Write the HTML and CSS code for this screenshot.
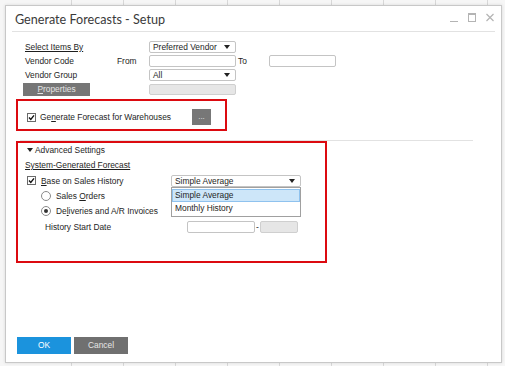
FILE: index.html
```html
<!DOCTYPE html>
<html>

<head>
  <meta charset="utf-8">
  <link rel="stylesheet" href="styles.css">
</head>

<body>

  <div class="window">
    <div class="titlebar">
      <span class="title">Generate Forecasts - Setup</span>
      <div class="controls">
        <svg width="8" height="9" viewBox="0 0 8 9"><path d="M0 8.5H8" stroke="#b4b4b4" stroke-width="1"/></svg>
        <svg width="8" height="9" viewBox="0 0 8 9"><rect x="0.5" y="0.5" width="7" height="8" fill="none" stroke="#b4b4b4"/><path d="M0 1.5H8" stroke="#b4b4b4"/></svg>
        <svg width="8" height="9" viewBox="0 0 8 9"><path d="M0.5 1L7.5 8M7.5 1L0.5 8" stroke="#b4b4b4" stroke-width="1.2"/></svg>
      </div>
    </div>

    <div class="content">
      <div class="form">
        <div class="row">
          <span class="label"><u>Select Items By</u></span>
          <span class="from"></span>
          <div class="field select">Preferred Vendor<i class="arrow"></i></div>
        </div>
        <div class="row">
          <span class="label">Vendor Code</span>
          <span class="from">From</span>
          <div class="field"></div>
          <span class="to">To</span>
          <div class="field short"></div>
        </div>
        <div class="row">
          <span class="label">Vendor Group</span>
          <span class="from"></span>
          <div class="field select">All<i class="arrow"></i></div>
        </div>
        <div class="row row-tall">
          <div class="wide-cell"><div class="btn-props"><u>P</u>roperties</div></div>
          <div class="field disabled"></div>
        </div>
      </div>

      <div class="callout callout-wh">
        <svg class="check" width="9" height="9" viewBox="0 0 9 9"><rect x="0.5" y="0.5" width="8" height="8" fill="#fff" stroke="#6a6a6a"/><path d="M2 4.5L3.8 6.4L7 2.4" fill="none" stroke="#111" stroke-width="1.4"/></svg>
        <span>Ge<u>n</u>erate Forecast for Warehouses</span>
        <div class="btn-dots">...</div>
      </div>

      <div class="rule"></div>

      <div class="callout callout-adv">
        <div class="adv-row adv-head">
          <svg class="tri" width="6" height="4" viewBox="0 0 6 4"><path d="M0 0H6L3 4Z" fill="#222"/></svg>
          <span>Advanced Settings</span>
        </div>
        <div class="adv-row adv-sub"><u>System-Generated Forecast</u></div>
        <div class="adv-row adv-check">
          <svg class="check" width="9" height="9" viewBox="0 0 9 9"><rect x="0.5" y="0.5" width="8" height="8" fill="#fff" stroke="#6a6a6a"/><path d="M2 4.5L3.8 6.4L7 2.4" fill="none" stroke="#111" stroke-width="1.4"/></svg>
          <span class="lbl"><u>B</u>ase on Sales History</span>
          <div class="field select method">Simple Average<i class="arrow"></i>
            <div class="options">
              <div class="option active">Simple Average</div>
              <div class="option">Monthly History</div>
            </div>
          </div>
        </div>
        <div class="adv-row adv-radio">
          <span class="radio"></span>
          <span>Sales <u>O</u>rders</span>
        </div>
        <div class="adv-row adv-radio">
          <span class="radio on"></span>
          <span>De<u>l</u>iveries and A/R Invoices</span>
        </div>
        <div class="adv-row adv-date">
          <span class="lbl">History Start Date</span>
          <div class="field date"></div>
          <span class="dash">-</span>
          <div class="field disabled date-to"></div>
        </div>
      </div>
    </div>

    <div class="footer">
      <div class="btn btn-ok">OK</div>
      <div class="btn btn-cancel">Cancel</div>
    </div>
  </div>

</body>

</html>
```

FILE: styles.css
```css
body {
  margin: 0;
  width: 505px;
  height: 366px;
  box-sizing: border-box;
  padding: 5px 0 0 5px;
  font-family: "Liberation Sans", Arial, sans-serif;
  font-size: 8.4px;
  color: #1e1e1e;
  background-color: #f6f6f6;
  /* spreadsheet grid behind the dialog */
  background-image: repeating-linear-gradient(90deg, transparent 0 51px, #d8d8d8 51px 52px);
  background-position: 20px 0;
  overflow: hidden;
}

u {
  text-decoration: underline;
  text-underline-offset: 1px;
}

/*********** Window ***********/

.window {
  width: 497px;
  height: 358px;
  box-sizing: border-box;
  border: 1px solid #c8c8c8;
  background: #fff;
  display: flex;
  flex-direction: column;
  box-shadow: 0 0 3px rgba(0, 0, 0, 0.12);
}

.titlebar {
  height: 23px;
  margin: 0 6px;
  padding: 2px 1px 0 3px;
  box-sizing: content-box;
  border-bottom: 1px solid #e2e2e2;
  display: flex;
  align-items: center;
}

.title {
  font-family: Lato, "Liberation Sans", sans-serif;
  font-size: 12.6px;
  color: #3a3a3a;
}

.controls {
  margin-left: auto;
  display: flex;
  gap: 10px;
  align-items: flex-end;
  margin-top: -4px;
}

.content {
  flex: 1;
  padding: 9px 0 0 10px;
}

/*********** Top form ***********/

.form {
  padding-left: 9px;
  display: flex;
  flex-direction: column;
  gap: 2px;
}

.row {
  display: flex;
  align-items: center;
  height: 12px;
}

.row-tall {
  height: 13px;
}

.label {
  width: 92px;
}

.from {
  width: 32px;
}

.to {
  width: 31px;
  padding-left: 2px;
}

.wide-cell {
  width: 124px;
}

.field {
  position: relative;
  box-sizing: border-box;
  width: 87px;
  height: 12px;
  border: 1px solid #c4c4c4;
  border-radius: 2px;
  background: #fff;
  padding-left: 3px;
  line-height: 10px;
  white-space: nowrap;
}

.field.short {
  width: 67px;
}

.field.disabled {
  background: #e6e6e6;
  border-color: #cfcfcf;
  height: 11px;
}

.arrow {
  position: absolute;
  right: 5px;
  top: 3px;
  border-left: 3px solid transparent;
  border-right: 3px solid transparent;
  border-top: 4px solid #222;
}

.btn-props {
  margin-left: -2px;
  width: 67px;
  height: 13px;
  background: #767676;
  color: #e4e4e4;
  text-align: center;
  line-height: 13px;
}

/*********** Red callouts ***********/

.callout {
  border: 2px solid #dc0a10;
  box-sizing: border-box;
}

.callout-wh {
  margin-top: 3px;
  width: 211px;
  height: 32px;
  padding: 8px 14px 4px 9px;
  display: flex;
  align-items: center;
}

.check {
  display: block;
  flex: none;
}

.callout-wh .check {
  margin-right: 4px;
}

.btn-dots {
  margin-left: auto;
  width: 19px;
  height: 16px;
  background: #777;
  color: #e8e8e8;
  text-align: center;
  line-height: 15px;
  font-size: 8px;
}

.rule {
  margin: 9px 0 0 4px;
  width: 453px;
  height: 1px;
  background: #e2e2e2;
}

.callout-adv {
  width: 311px;
  height: 122px;
  padding-top: 1px;
  display: flex;
  flex-direction: column;
  gap: 3px;
}

.adv-row {
  display: flex;
  align-items: center;
  height: 12px;
}

.adv-head {
  padding-left: 9px;
}

.tri {
  margin-right: 2px;
}

.adv-sub {
  padding-left: 7px;
}

.adv-check {
  height: 13px;
  padding-left: 9px;
}

.adv-check .check {
  margin-right: 5px;
}

.adv-check .lbl {
  width: 130px;
}

.field.method {
  width: 130px;
}

.options {
  position: absolute;
  left: -1px;
  top: 11px;
  width: 130px;
  box-sizing: border-box;
  border: 1px solid #a0a0a0;
  background: #fff;
  padding: 1px 0;
}

.option {
  height: 13px;
  line-height: 13px;
  padding-left: 3px;
  box-sizing: border-box;
}

.option.active {
  background: #cde6f9;
  border: 1px solid #8fc2ee;
  line-height: 11px;
  padding-left: 2px;
}

.adv-radio {
  padding-left: 23px;
}

.radio {
  width: 10px;
  height: 10px;
  box-sizing: border-box;
  border: 1px solid #8a8a8a;
  border-radius: 50%;
  margin-right: 5px;
  background: #fff;
  position: relative;
}

.radio.on::after {
  content: "";
  position: absolute;
  left: 2px;
  top: 2px;
  width: 4px;
  height: 4px;
  border-radius: 50%;
  background: #333;
}

.adv-date {
  margin-top: 1px;
  padding-left: 27px;
}

.adv-date .lbl {
  width: 142px;
}

.field.date {
  width: 68px;
}

.dash {
  width: 5px;
  text-align: center;
}

.field.date-to {
  width: 38px;
  height: 12px;
}

/*********** Footer ***********/

.footer {
  padding: 0 0 8px 11px;
  display: flex;
  gap: 3px;
}

.btn {
  width: 54px;
  height: 17px;
  line-height: 17px;
  text-align: center;
}

.btn-ok {
  background: #1b93dd;
  color: #fff;
}

.btn-cancel {
  background: #707070;
  color: #e6e6e6;
}
```
